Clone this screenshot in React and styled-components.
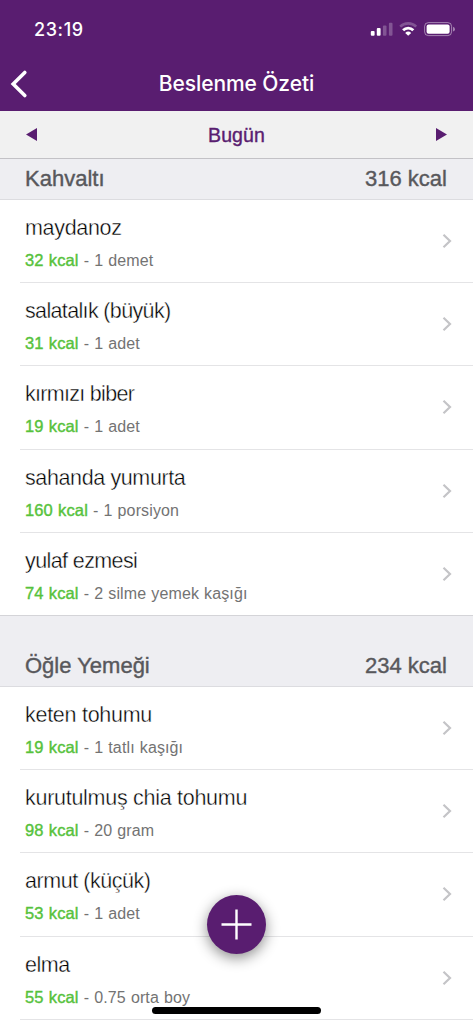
import React, { Component } from "react";
import styled, { createGlobalStyle } from "styled-components";

const GlobalStyle = createGlobalStyle`
  * {
    box-sizing: border-box;
  }

  body {
    margin: 0;
    background: #ffffff;
    font-family: "Liberation Sans", Arial, sans-serif;
  }
`;

const Screen = styled.div`
  position: relative;
  display: flex;
  flex-direction: column;
  width: 100%;
  height: 1024px;
  overflow: hidden;
  background: #ffffff;
`;

const Header = styled.header`
  flex: none;
  height: 111px;
  background: #591d70;
  color: #ffffff;
  font-family: Inter, sans-serif;
`;

const StatusBar = styled.div`
  display: flex;
  justify-content: space-between;
  align-items: center;
  height: 58px;
  padding: 0 17px 0 34px;
`;

const Clock = styled.span`
  font-size: 18px;
  font-weight: 500;
  letter-spacing: 0.6px;
`;

const StatusIcons = styled.svg`
  display: block;
  width: 88px;
  height: 18px;
`;

const NavBar = styled.div`
  display: grid;
  grid-template-columns: 60px 1fr 60px;
  align-items: center;
  height: 51px;
`;

const BackIcon = styled.svg`
  display: block;
  width: 30px;
  height: 30px;
  margin-left: 4px;
`;

const Title = styled.h1`
  margin: 0;
  font-size: 21px;
  font-weight: 500;
  letter-spacing: -0.08px;
  text-align: center;
  white-space: nowrap;
`;

const DateBar = styled.div`
  display: flex;
  flex: none;
  justify-content: space-between;
  align-items: center;
  height: 48px;
  padding: 0 26px;
  background: #f1f1f1;
  border-bottom: 1px solid #c3c2c6;
  color: #591d70;
`;

const Arrow = styled.svg`
  display: block;
  width: 11px;
  height: 13px;
  fill: currentColor;
`;

const Day = styled.span`
  padding-top: 1px;
  font-size: 19.5px;
  line-height: 24px;
  letter-spacing: 0.1px;
  -webkit-text-stroke: 0.4px currentColor;
`;

const SectionHeader = styled.div`
  display: flex;
  flex: none;
  justify-content: space-between;
  align-items: flex-end;
  height: ${(props) => props.$height};
  padding: 0 26px 7px 25px;
  background: #eeeef2;
  border-bottom: 1px solid #dcdce0;
  color: #58585c;
  font-size: 22px;
  line-height: 26px;
  -webkit-text-stroke: 0.4px currentColor;
`;

const List = styled.ul`
  flex: none;
  margin: 0;
  padding: 0;
  list-style: none;

  &:not(:last-of-type) {
    border-bottom: 1px solid #d4d4d8;
  }

  &:not(:last-of-type) > li:last-child {
    height: 82.2px;
    border-bottom: 0;
  }
`;

const Row = styled.li`
  display: flex;
  justify-content: space-between;
  align-items: center;
  height: 83.2px;
  margin-left: 20px;
  padding: 0 21px 0 5px;
  border-bottom: 1px solid #e4e4e6;
`;

const Food = styled.div`
  padding-top: 4px;
  white-space: nowrap;
`;

const FoodName = styled.div`
  color: #000000;
  font-size: 21.5px;
  line-height: 28px;
  letter-spacing: ${(props) => props.$tracking || "-0.33px"};
  -webkit-text-stroke: 0.4px #ffffff;
`;

const Detail = styled.div`
  margin-top: 7px;
  color: #737373;
  font-size: 16px;
  line-height: 22px;
  letter-spacing: 0.12px;
  word-spacing: 0.5px;
`;

const Calories = styled.span`
  color: #56c23c;
  font-size: 16.5px;
  -webkit-text-stroke: 0.4px currentColor;
`;

const Chevron = styled.svg`
  display: block;
  width: 10px;
  height: 16px;
`;

const AddButton = styled.button`
  position: absolute;
  bottom: 70px;
  left: 50%;
  display: flex;
  justify-content: center;
  align-items: center;
  width: 59px;
  height: 59px;
  margin-left: -29.5px;
  padding: 0;
  border: 0;
  border-radius: 50%;
  background: #591d70;
  box-shadow: 0 4px 14px rgba(0, 0, 0, 0.45);
`;

const HomeIndicator = styled.div`
  position: absolute;
  bottom: 10px;
  left: 152px;
  width: 169px;
  height: 7px;
  border-radius: 4px;
  background: #000000;
`;

const sections = [
  {
    name: "Kahvaltı",
    total: "316 kcal",
    height: "41px",
    foods: [
      { name: "maydanoz", kcal: 32, amount: "1 demet" },
      { name: "salatalık (büyük)", kcal: 31, amount: "1 adet", tracking: "-0.65px" },
      { name: "kırmızı biber", kcal: 19, amount: "1 adet", tracking: "-0.7px" },
      { name: "sahanda yumurta", kcal: 160, amount: "1 porsiyon", tracking: "-0.38px" },
      { name: "yulaf ezmesi", kcal: 74, amount: "2 silme yemek kaşığı", tracking: "-0.6px" },
    ],
  },
  {
    name: "Öğle Yemeği",
    total: "234 kcal",
    height: "71px",
    foods: [
      { name: "keten tohumu", kcal: 19, amount: "1 tatlı kaşığı", tracking: "-0.27px" },
      { name: "kurutulmuş chia tohumu", kcal: 98, amount: "20 gram", tracking: "-0.28px" },
      { name: "armut (küçük)", kcal: 53, amount: "1 adet", tracking: "-0.45px" },
      { name: "elma", kcal: 55, amount: "0.75 orta boy", tracking: "-0.5px" },
    ],
  },
];

export default class App extends Component {
  renderFood(food) {
    return (
      <Row key={food.name}>
        <Food>
          <FoodName $tracking={food.tracking}>{food.name}</FoodName>
          <Detail>
            <Calories>{food.kcal} kcal</Calories> - {food.amount}
          </Detail>
        </Food>
        <Chevron viewBox="0 0 10 16" fill="none" stroke="#c4c4c7" strokeWidth="2.2">
          <path d="M1.5 1.8 L8 8 L1.5 14.2" />
        </Chevron>
      </Row>
    );
  }

  render() {
    return (
      <Screen>
        <GlobalStyle />
        <Header>
          <StatusBar>
            <Clock>23:19</Clock>
            <StatusIcons viewBox="368 20 88 18" fill="#ffffff">
              <rect x="370.8" y="31" width="3.8" height="4.8" rx="1" />
              <rect x="376.8" y="28" width="3.8" height="7.8" rx="1" />
              <rect x="382.9" y="25.4" width="3.6" height="10.4" rx="1" opacity="0.25" />
              <rect x="388.9" y="22.8" width="3.6" height="13" rx="1" opacity="0.25" />
              <g fill="none" stroke="#ffffff">
                <path d="M400.2 26.6 A11.5 11.5 0 0 1 416.2 26.6" strokeWidth="2.6" opacity="0.25" />
                <path d="M403.1 30.2 A7.1 7.1 0 0 1 413.3 30.2" strokeWidth="2.8" />
              </g>
              <path d="M405.2 32.9 Q408.2 30.2 411.2 32.9 L408.2 35.8 Z" />
              <rect x="424.6" y="22.6" width="27" height="13" rx="3.8" fill="none" stroke="#ffffff" opacity="0.45" />
              <rect x="426.6" y="24.4" width="23" height="9.4" rx="2" />
              <path d="M453 26.8 Q455 27.6 455 29.2 Q455 30.8 453 31.6 Z" opacity="0.45" />
            </StatusIcons>
          </StatusBar>
          <NavBar>
            <BackIcon viewBox="0 0 30 30" fill="none" stroke="#ffffff" strokeWidth="3.6" strokeLinecap="round">
              <path d="M20.8 3.5 L9.2 15 L20.8 26.5" />
            </BackIcon>
            <Title>Beslenme Özeti</Title>
          </NavBar>
        </Header>
        <DateBar>
          <Arrow viewBox="0 0 11 13">
            <path d="M0 6.5 L11 0 V13 Z" />
          </Arrow>
          <Day>Bugün</Day>
          <Arrow viewBox="0 0 11 13">
            <path d="M11 6.5 L0 0 V13 Z" />
          </Arrow>
        </DateBar>
        {sections.map((section) => (
          <React.Fragment key={section.name}>
            <SectionHeader $height={section.height}>
              <span>{section.name}</span>
              <span>{section.total}</span>
            </SectionHeader>
            <List>{section.foods.map(this.renderFood)}</List>
          </React.Fragment>
        ))}
        <AddButton>
          <svg width="31" height="31" viewBox="0 0 31 31" stroke="#ffffff" strokeWidth="2.4">
            <path d="M15.5 0.5 V30.5 M0.5 15.5 H30.5" />
          </svg>
        </AddButton>
        <HomeIndicator />
      </Screen>
    );
  }
}
